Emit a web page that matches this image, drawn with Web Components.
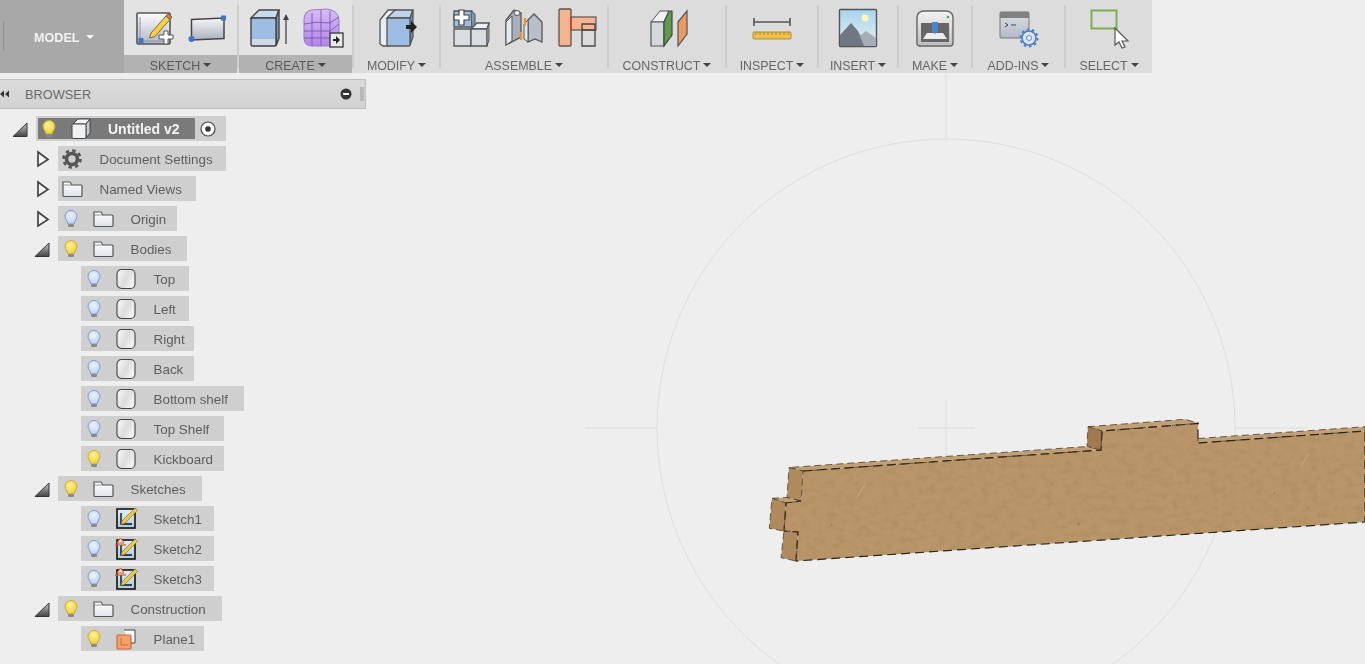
<!DOCTYPE html>
<html lang="en">
<head>
<meta charset="utf-8">
<title>Untitled v2</title>
<style>
    html, body { margin: 0; height: 100%; overflow: hidden; background: #eee; }
    body { font-family: "Liberation Sans", Arial, sans-serif; color: #5c5c5c; }
    /* the reference is a slightly soft capture */
    design-toolbar, browser-panel, model-viewport { filter: blur(.35px); }
</style>
</head>
<body>
<model-viewport></model-viewport>
<design-toolbar>
    <workspace-switch>MODEL</workspace-switch>
    <tool-group label="SKETCH" width="113" active>
        <app-icon name="sketch"></app-icon><app-icon name="rectangle"></app-icon>
    </tool-group>
    <tool-group label="CREATE" width="115" active separated>
        <app-icon name="extrude"></app-icon><app-icon name="form"></app-icon>
    </tool-group>
    <tool-group label="MODIFY" width="87" separated><app-icon name="pressPull"></app-icon></tool-group>
    <tool-group label="ASSEMBLE" width="168" separated>
        <app-icon name="component"></app-icon><app-icon name="joint"></app-icon><app-icon name="asBuilt"></app-icon>
    </tool-group>
    <tool-group label="CONSTRUCT" width="118" separated><app-icon name="plane"></app-icon></tool-group>
    <tool-group label="INSPECT" width="92" separated><app-icon name="measure"></app-icon></tool-group>
    <tool-group label="INSERT" width="80" separated><app-icon name="picture"></app-icon></tool-group>
    <tool-group label="MAKE" width="74" separated><app-icon name="printer"></app-icon></tool-group>
    <tool-group label="ADD-INS" width="93" separated><app-icon name="addins"></app-icon></tool-group>
    <tool-group label="SELECT" width="88" separated><app-icon name="select"></app-icon></tool-group>
</design-toolbar>
<browser-panel>
    <tree-row depth="0" width="190" expander="open" bulb="on" icon="box" active>Untitled v2<app-icon slot="end" name="target" size="20"></app-icon></tree-row>
    <tree-row depth="1" width="168" expander="closed" icon="gear">Document Settings</tree-row>
    <tree-row depth="1" width="138" expander="closed" icon="folder">Named Views</tree-row>
    <tree-row depth="1" width="119" expander="closed" bulb="off" icon="folder">Origin</tree-row>
    <tree-row depth="1" width="129" expander="open" bulb="on" icon="folder">Bodies</tree-row>
    <tree-row depth="2" width="108" bulb="off" icon="body">Top</tree-row>
    <tree-row depth="2" width="108" bulb="off" icon="body">Left</tree-row>
    <tree-row depth="2" width="113" bulb="off" icon="body">Right</tree-row>
    <tree-row depth="2" width="113" bulb="off" icon="body">Back</tree-row>
    <tree-row depth="2" width="163" bulb="off" icon="body">Bottom shelf</tree-row>
    <tree-row depth="2" width="143" bulb="off" icon="body">Top Shelf</tree-row>
    <tree-row depth="2" width="143" bulb="on" icon="body">Kickboard</tree-row>
    <tree-row depth="1" width="144" expander="open" bulb="on" icon="folder">Sketches</tree-row>
    <tree-row depth="2" width="133" bulb="off" icon="sketchItem">Sketch1</tree-row>
    <tree-row depth="2" width="133" bulb="off" icon="sketchWarn">Sketch2</tree-row>
    <tree-row depth="2" width="133" bulb="off" icon="sketchWarn">Sketch3</tree-row>
    <tree-row depth="1" width="164" expander="open" bulb="on" icon="folder">Construction</tree-row>
    <tree-row depth="2" width="123" bulb="on" icon="planeItem">Plane1</tree-row>
</browser-panel>
<script>
/**
 * Shared fragments for the icon set.
 */
const grad = (id, top, bottom) => `<linearGradient id="${id}" x1="0" y1="0" x2="0" y2="1"><stop offset="0" stop-color="${top}"/><stop offset="1" stop-color="${bottom}"/></linearGradient>`;

/**
 * All icons, as the inner markup of a 40x40 svg (tree icons use the same box).
 */
const ICONS = {
    sketch: `<defs>${grad('a', '#fdfdfd', '#aeb6c8')}</defs>
        <rect x="3" y="5" width="33" height="31" rx="1" fill="url(#a)" stroke="#555" stroke-width="1.6"/>
        <path d="M6 9v24h24" fill="none" stroke="#8a8f9c"/>
        <rect x="4.5" y="30" width="5" height="5" fill="#3f74c8"/>
        <path d="M17 25l15-17 4 3.500-15 17-5.500 1.500z" fill="#f3cf4a" stroke="#7a6a3a"/>
        <path d="M32 8l2-2.500 4 3.500-2 2.500z" fill="#c9835a" stroke="#7a5a3a"/>
        <path d="M26 26h5v-4h4v4h5v4h-5v5h-4v-5h-5z" transform="translate(-1 1)" fill="#fff" stroke="#555"/>`,
    rectangle: `<defs>${grad('a', '#f6f7f9', '#a9b0c0')}</defs>
        <path d="M4.500 11.500L37 10v20.500L4.500 32z" fill="url(#a)" stroke="#444" stroke-width="1.500"/>
        <rect x="34" y="7.500" width="5" height="5" fill="#3f74c8"/>
        <circle cx="4.500" cy="31" r="3" fill="#3f74c8"/>`,
    extrude: `<path d="M2 10L10 2h20l-3 8z" fill="#c8daee" stroke="#444" stroke-width="1.400"/>
        <path d="M27 10l3-8v28l-3 8z" fill="#8299b6" stroke="#444" stroke-width="1.400"/>
        <rect x="2" y="10" width="25" height="28" rx="1.500" fill="#9dbde2" stroke="#444" stroke-width="1.400"/>
        <rect x="3" y="31" width="23" height="6" fill="#cfdae6"/>
        <path d="M37 36V10" stroke="#444" stroke-width="1.300"/><path d="M34 12l3-6 3 6z" fill="#444"/>`,
    form: `<defs>${grad('a', '#d8bdf5', '#b184ea')}</defs>
        <path d="M2 12Q2 3 10 2L25 1Q36 2 37 12V32Q37 38 30 38H10Q2 38 2 30z" fill="url(#a)" stroke="#9a78cc"/>
        <path d="M2 16Q14 13 28 15L37 9M2 23H28L37 16M2 30H28M10 5V38M19 2V38M28 3V38" fill="none" stroke="#7a56b0" stroke-width=".9"/>
        <rect x="28" y="25" width="13" height="14" fill="#e8e8e8" stroke="#444" stroke-width="1.400"/>
        <path d="M31 31h3v-3l4 4-4 4v-3h-3z" fill="#222"/>`,
    pressPull: `<path d="M3 36V12L11 2h8L12 12v26H6z" fill="#e9edf1" stroke="#555" stroke-width="1.300"/>
        <path d="M10 10l8-8h18l-3 8z" fill="#bfd3ea" stroke="#555" stroke-width="1.300"/>
        <path d="M33 10l3-8v27l-3 8z" fill="#6f8fb8" stroke="#555" stroke-width="1.300"/>
        <rect x="10" y="10" width="23" height="28" rx="1" fill="#9dbde2" stroke="#555" stroke-width="1.300"/>
        <path d="M29 17h5v-4l6 6-6 6v-4h-5z" fill="#222"/>`,
    component: `<path d="M3 3h18v16H3z" fill="#9dbde2" stroke="#555" stroke-width="1.300"/>
        <path d="M20 3l4 3v15h-3z" fill="#7b98ba" stroke="#555"/>
        <path d="M3 21h17v17H3z" fill="#d9dde2" stroke="#555" stroke-width="1.300"/>
        <path d="M20 21l6-6h12l-2 6z" fill="#eef0f3" stroke="#555" stroke-width="1.300"/>
        <path d="M20 21h16v17H20z" fill="#d9dde2" stroke="#555" stroke-width="1.300"/>
        <path d="M36 21l2-6v17l-2 6z" fill="#aab1ba" stroke="#555"/>
        <path d="M3 7h5V2h5v5h5v5h-5v5H8v-5H3z" fill="#fff" stroke="#444" stroke-width="1.200"/>`,
    joint: `<path d="M2 37V12L10 2l7 3v24z" fill="#a9b0bb" stroke="#555" stroke-width="1.300"/>
        <ellipse cx="13" cy="5" rx="3" ry="2.500" fill="#eee" stroke="#555"/>
        <path d="M2 37V14l6-6v25z" fill="#e6e9ec" stroke="#555"/>
        <path d="M38 34V14L30 6l-6 6v22l7-3z" fill="#b9bfc9" stroke="#555" stroke-width="1.300"/>
        <path d="M24 12l-4 4v15l4 3z" fill="#e6e9ec" stroke="#555"/>
        <path d="M21 10v8M17 24v8" stroke="#e8913f" stroke-width="2.400"/>`,
    asBuilt: `<rect x="2" y="1" width="12" height="37" rx="1" fill="#f5b48b" stroke="#555" stroke-width="1.300"/>
        <rect x="14" y="9" width="25" height="13" fill="#f5b48b" stroke="#555" stroke-width="1.200"/>
        <path d="M14 9v13" stroke="#e2312b" stroke-width="1.200"/>
        <path d="M25 16h13v22H25zM25 22h13" fill="none" stroke="#444" stroke-width="1.300"/>`,
    plane: `<path d="M4 14l9-11h9l-5 11z" fill="#f1f3f2" stroke="#555"/>
        <path d="M4 14h13v24H4z" fill="#d4d8dc" stroke="#555" stroke-width="1.200"/>
        <path d="M17 14l5-11h3v24l-8 11z" fill="#5f9a4d" stroke="#444" stroke-width="1.200"/>
        <path d="M31 14l9-11v23l-9 12z" fill="#e89c62" stroke="#555" stroke-width="1.200"/>`,
    measure: `<path d="M2 14h36" stroke="#555" stroke-width="1.400"/><path d="M2 10v8M38 10v8" stroke="#555" stroke-width="1.600"/>
        <rect x="1" y="24" width="38" height="7" rx="1" fill="#eec04c" stroke="#b08a3a"/>
        <path d="M4 24v3M8 24v3M12 24v3M16 24v3M20 24v3M24 24v3M28 24v3M32 24v3M36 24v3" stroke="#9a7a2a" stroke-width=".8"/>`,
    picture: `<defs>${grad('a', '#a8d4ef', '#e6f0f0')}</defs>
        <rect x="1.500" y="1.500" width="37" height="37" rx="1" fill="url(#a)" stroke="#555" stroke-width="1.400"/>
        <circle cx="27" cy="10" r="3.500" fill="#fdf6c0"/>
        <path d="M2 29l12-10 9 8 5-4 10 7v8H2z" fill="#a5adb5"/>
        <path d="M2 38V27l11-12 7 8 6 15z" fill="#6f7880"/>`,
    printer: `<defs>${grad('a', '#f4f4f4', '#bdbdbd')}</defs>
        <path d="M2 10Q2 4 8 3H32Q38 4 38 10V35Q38 38 35 38H5Q2 38 2 35z" fill="url(#a)" stroke="#666" stroke-width="1.400"/>
        <rect x="6" y="15" width="28" height="19" fill="#666"/>
        <path d="M8 31l4-6h16l4 6z" fill="#ececec"/><path d="M17 14h6v9l-3 3-3-3z" fill="#4a86cf"/>
        <circle cx="33" cy="9" r="1.300" fill="#4aa54a"/>`,
    addins: `<defs>${grad('a', '#dde0e6', '#b3bac6')}</defs>
        <rect x="1" y="4" width="29" height="26" rx="1" fill="url(#a)" stroke="#777"/>
        <rect x="1" y="4" width="29" height="6" fill="#808080"/>
        <path d="M6 15l3 2-3 2M12 17h5" fill="none" stroke="#444"/>
        <circle cx="30" cy="30" r="7" fill="#d6e5f8" stroke="#4a7cc8" stroke-width="1.600"/>
        <circle cx="30" cy="30" r="8.500" fill="none" stroke="#4a7cc8" stroke-width="2" stroke-dasharray="2.600 2.740"/>
        <circle cx="30" cy="30" r="2.400" fill="#fff" stroke="#4a7cc8"/>`,
    select: `<rect x="2.500" y="2.500" width="25" height="18" fill="none" stroke="#7fac53" stroke-width="2"/>
        <path d="M26 20v17l4-3 3 6 3-1-3-6h6z" fill="#fff" stroke="#555" stroke-width="1.200"/>`,
    box: `<path d="M4 7l5-5h12l-4 5z" fill="#f5f5f5" stroke="#444"/>
        <path d="M17 7l4-5v14l-4 5z" fill="#c9ccd2" stroke="#444"/>
        <rect x="3" y="7" width="14" height="14.500" rx="1.500" fill="#eff0f2" stroke="#444"/>`,
    folder: `<defs>${grad('a', '#ffffff', '#dfe3ea')}</defs>
        <path d="M3 5h7l2 3h9q1 0 1 1v9.500q0 1-1 1H4q-1 0-1-1z" fill="url(#a)" stroke="#555" stroke-width="1.200"/>
        <path d="M3 8h9" stroke="#777" stroke-width=".8"/>`,
    body: `<defs><linearGradient id="a" x1="0" y1="0" x2="1" y2=".5"><stop offset="0" stop-color="#fbfbfb"/><stop offset=".6" stop-color="#dcdcdc"/><stop offset="1" stop-color="#f2f2f2"/></linearGradient></defs>
        <rect x="3" y="2.500" width="18" height="19" rx="4.500" fill="url(#a)" stroke="#444" stroke-width="1.100"/>`,
    gear: `<circle cx="12" cy="12" r="5.500" fill="none" stroke="#555" stroke-width="3.600"/>
        <circle cx="12" cy="12" r="8.500" fill="none" stroke="#555" stroke-width="2.600" stroke-dasharray="3.400 3.270"/>`,
    target: `<circle cx="10" cy="10" r="7" fill="#fff" stroke="#444" stroke-width="1.200"/><circle cx="10" cy="10" r="2.800" fill="#333"/>`,
    sketchItem: `<defs>${grad('a', '#e4eef5', '#a9cbe2')}</defs>
        <rect x="3" y="2" width="18" height="19" fill="url(#a)" stroke="#111" stroke-width="1.600"/>
        <path d="M7 6v11h11" fill="none" stroke="#111" stroke-width="1.400"/>
        <path d="M8 14L21 1l2.500 2.500-13 13-3.500 1z" fill="#f0c93a" stroke="#666" stroke-width=".6"/>`,
    sketchWarn: `<defs>${grad('a', '#e4eef5', '#a9cbe2')}</defs>
        <rect x="3" y="3" width="18" height="19" fill="url(#a)" stroke="#111" stroke-width="1.600"/>
        <path d="M7 8v10h11" fill="none" stroke="#111" stroke-width="1.400"/>
        <path d="M8 15L21 2l2.500 2.500-13 13-3.500 1z" fill="#f0c93a" stroke="#666" stroke-width=".6"/>
        <path d="M3 6l3.500-5L10 6z" fill="#fbe3d4" stroke="#d8592a"/><path d="M1 8h11" stroke="#d8592a" stroke-width="1.200"/>`,
    planeItem: `<path d="M10 3h11v13H16" fill="#fff" stroke="#444" stroke-width="1"/>
        <rect x="3" y="8" width="14" height="14" rx="1" fill="#f3a26c" stroke="#d2683a" stroke-width="1.200"/>
        <path d="M7 11v7h7" fill="none" stroke="#d2683a"/>`,
    bulbOn: `<defs><radialGradient id="b" cx=".45" cy=".35" r=".7"><stop offset="0" stop-color="#fff59a"/><stop offset="1" stop-color="#f0c72c"/></radialGradient></defs>
        <path d="M8 1.500a6 6 0 0 1 6 6c0 3-2.500 4.500-3 7.500H5C4.500 12 2 10.500 2 7.500a6 6 0 0 1 6-6z" fill="url(#b)" stroke="#cfa93a"/>
        <rect x="5" y="15" width="6" height="3" rx="1.200" fill="#8a8a8a"/>`,
    bulbOff: `<defs><radialGradient id="b" cx=".45" cy=".35" r=".7"><stop offset="0" stop-color="#eef4ff"/><stop offset="1" stop-color="#b7cdf2"/></radialGradient></defs>
        <path d="M8 1.500a6 6 0 0 1 6 6c0 3-2.500 4.500-3 7.500H5C4.500 12 2 10.500 2 7.500a6 6 0 0 1 6-6z" fill="url(#b)" stroke="#7f9bd0"/>
        <rect x="5" y="15" width="6" height="3" rx="1.200" fill="#8a8a8a"/>`,
    arrowOpen: `<defs>${grad('a', '#c8c8c8', '#444')}</defs><path d="M1 14.500L15 1v13.500z" fill="url(#a)" stroke="#333"/>`,
    arrowClosed: `<path d="M2 1l10 7.500L2 15z" fill="#f4f4f4" stroke="#444" stroke-width="1.700"/>`
};

/**
 * Icon drawn as inline svg, looked up by name in ICONS.
 */
customElements.define('app-icon', class AppIcon extends HTMLElement {
    /**
     * Creates a new instance of the class.
     */
    constructor() {
        super();
        this.attachShadow({ mode: 'open' });
    }

    /**
     * Event triggered when the component is attached to DOM.
     * Renders the svg in the requested size.
     */
    connectedCallback() {
        const size = this.getAttribute('size') || 40;
        this.shadowRoot.innerHTML = `
            <style>:host { display: block; width: ${size}px; height: ${size}px; } svg { display: block; overflow: visible; }</style>
            <svg width="${size}" height="${size}" viewBox="0 0 ${size} ${size}">${ICONS[this.getAttribute('name')] || ''}</svg>
        `;
    }
});

/**
 * Top toolbar strip holding the workspace switch and the tool groups.
 */
customElements.define('design-toolbar', class DesignToolbar extends HTMLElement {
    constructor() {
        super();
        this.attachShadow({ mode: 'open' });
        this.shadowRoot.innerHTML = `
            <style>
                :host { display: flex; position: relative; width: 1152px; height: 73px; background: #dcdcdc; }
            </style>
            <slot></slot>
        `;
    }
});

/**
 * Dark MODEL dropdown at the left of the toolbar.
 */
customElements.define('workspace-switch', class WorkspaceSwitch extends HTMLElement {
    constructor() {
        super();
        this.attachShadow({ mode: 'open' });
        this.shadowRoot.innerHTML = `
            <style>
                :host {
                    display: flex; box-sizing: border-box; width: 124px; height: 73px; padding: 2px 0 0 34px;
                    align-items: center; gap: 7px; background: #a8a8a8; color: #f4f4f4;
                    font-size: 12.6px; font-weight: bold; position: relative;
                }
                :host::before {
                    content: ""; position: absolute; left: 3px; top: 22px; width: 1px; height: 28px; background: #8f8f8f;
                }
                i { border: 4.500px solid transparent; border-top: 4.500px solid #f4f4f4; border-bottom: 0; margin-top: -2px; }
            </style>
            <span><slot></slot></span><i></i>
        `;
    }
});

/**
 * Toolbar group: a row of tool icons above a label with a dropdown arrow.
 */
customElements.define('tool-group', class ToolGroup extends HTMLElement {
    constructor() {
        super();
        this.attachShadow({ mode: 'open' });
        this.shadowRoot.innerHTML = `
            <style>
                :host { display: flex; flex-direction: column; box-sizing: border-box; height: 73px; position: relative; }
                :host([separated]) { padding-left: 2px; }
                :host([separated])::before {
                    content: ""; position: absolute; left: 0; top: 5px; bottom: 5px; width: 2px; background: #cdcdcd;
                }
                .tools { display: flex; justify-content: center; gap: 13px; height: 55px; box-sizing: border-box; padding-top: 8px; }
                .label {
                    display: flex; justify-content: center; align-items: center; gap: 3px; height: 18px;
                    box-sizing: border-box; padding-top: 3px; font-size: 12.4px; color: #666;
                }
                :host([active]) .tools { background: #e3e3e3; }
                :host([active]) .label { background: #b2b2b2; color: #5a5a5a; }
                i { border: 4px solid transparent; border-top: 4px solid #444; border-bottom: 0; margin-top: -2px; }
            </style>
            <div class="tools"><slot></slot></div>
            <div class="label"><span></span><i></i></div>
        `;
    }

    /**
     * Event triggered when the component is attached to DOM.
     * Applies the label text and the group width from the attributes.
     */
    connectedCallback() {
        this.shadowRoot.querySelector('span').textContent = this.getAttribute('label');
        this.style.width = `${this.getAttribute('width')}px`;
    }
});

/**
 * Browser panel: a title bar over the tree rows.
 */
customElements.define('browser-panel', class BrowserPanel extends HTMLElement {
    /**
     * Creates a new instance of the class.
     */
    constructor() {
        super();
        this.attachShadow({ mode: 'open' });
        this.shadowRoot.innerHTML = `
            <style>
                :host { display: block; position: relative; margin-top: 6px; }
                header {
                    display: flex; align-items: center; box-sizing: border-box; width: 366px; height: 30px;
                    background: linear-gradient(#dbdbdb, #d2d2d2); border: 1px solid #bdbdbd; border-left: 0;
                    font-size: 12.8px; color: #6a6a6a;
                }
                header span { margin-left: 15px; flex: 1; }
                svg { display: block; }
                .rows { padding-top: 7px; }
            </style>
            <header>
                <svg width="10" height="10" viewBox="0 0 10 10"><path d="M0 5l4-3.500v7zM5 5l4-3.500v7z" fill="#333"/></svg>
                <span>BROWSER</span>
                <svg width="12" height="12" viewBox="0 0 12 12"><circle cx="6" cy="6" r="5.500" fill="#333"/><rect x="3" y="5" width="6" height="2" fill="#fff"/></svg>
                <svg width="8" height="16" viewBox="0 0 8 16" style="margin:0 -1px 0 6px"><path d="M3 1v14M5 1v14" stroke="#9a9a9a"/></svg>
            </header>
            <div class="rows"><slot></slot></div>
        `;
    }
});

/**
 * One row of the browser tree: expander, then a grey chip with bulb, icon and name.
 */
customElements.define('tree-row', class TreeRow extends HTMLElement {
    /**
     * Left margin of a row for each tree depth.
     */
    _margins = { 0: 12, 1: 34, 2: 57 };

    /**
     * Creates a new instance of the class.
     */
    constructor() {
        super();
        this.attachShadow({ mode: 'open' });
    }

    /**
     * Event triggered when the component is attached to DOM.
     * Builds the row from its attributes.
     */
    connectedCallback() {
        const bulb = this.getAttribute('bulb');
        const expander = this.getAttribute('expander');
        const depth = this.getAttribute('depth');
        const arrow = expander === 'open' ? 'arrowOpen' : 'arrowClosed';
        this.shadowRoot.innerHTML = `
            <style>
                :host { display: flex; height: 25px; margin: 0 0 5px ${this._margins[depth]}px; font-size: 13.4px; color: #5e5e5e; }
                .expander { width: 24px; padding-top: 6px; box-sizing: border-box; }
                :host([expander="closed"]) .expander { padding-left: 2px; padding-top: 5px; }
                .chip { display: flex; box-sizing: border-box; width: ${this.getAttribute('width')}px; height: 25px; background: #cfcfcf; }
                .inner { display: flex; flex: 1; align-items: center; }
                .bulb { width: 26px; padding-left: 5px; box-sizing: border-box; }
                .icon { width: 38px; padding-left: 7px; box-sizing: border-box; }
                .bare { width: 28px; padding-left: 2px; padding-right: 0; }
                .bare + .name { margin-left: 13.500px; }
                .name { margin-left: 8.500px; padding-top: 1px; white-space: nowrap; }
                :host([active]) .chip { padding: 2px 0 2px 2px; }
                :host([active]) .inner { background: #7a7a7a; color: #f4f4f4; font-weight: bold; font-size: 14px; }
                :host([active]) .bulb { width: 24px; padding-left: 3px; }
                :host([active]) .name { margin-left: 8px; }
                .end { display: flex; align-items: center; width: 31px; box-sizing: border-box; padding-left: 3px; }
            </style>
            <div class="expander">${expander ? `<app-icon name="${arrow}" size="16"></app-icon>` : ''}</div>
            <div class="chip">
                <div class="inner">
                    ${bulb ? `<div class="bulb"><app-icon name="${bulb === 'on' ? 'bulbOn' : 'bulbOff'}" size="19"></app-icon></div>` : ''}
                    <div class="icon ${bulb ? '' : 'bare'}"><app-icon name="${this.getAttribute('icon')}" size="24"></app-icon></div>
                    <span class="name"><slot></slot></span>
                </div>
                ${this.querySelector('[slot=end]') ? '<div class="end"><slot name="end"></slot></div>' : ''}
            </div>
        `;
    }
});

/**
 * 3D viewport behind the interface: ground circle, axis marks and the textured board.
 */
customElements.define('model-viewport', class ModelViewport extends HTMLElement {
    /**
     * Outline of the front face of the board.
     */
    _front = '803,471 1101,450 1102,431 1198,423.500 1198,443 1365,431 1365,522 796,561 798,532 784,531 786,503 801,501';

    /**
     * Creates a new instance of the class.
     */
    constructor() {
        super();
        this.attachShadow({ mode: 'open' });
        this.shadowRoot.innerHTML = `
            <style>
                :host { position: absolute; inset: 0; display: block; }
                svg { display: block; }
                .guide { fill: none; stroke: #dedede; }
                .edge { stroke: #2e2618; stroke-width: 1.200; stroke-dasharray: 9 5; fill: none; }
                .edge-soft { stroke: #4a3e2a; stroke-width: .8; stroke-dasharray: 7 4; }
                .streak { stroke: #c8a67c; stroke-width: 1.400; fill: none; opacity: .7; }
                .speck { stroke: #8b6a44; stroke-width: 1.400; fill: none; opacity: .7; }
            </style>
            <svg width="1365" height="664" viewBox="0 0 1365 664">
                <defs>
                    <filter id="mdf" x="0" y="0" width="1" height="1">
                        <feTurbulence type="fractalNoise" baseFrequency=".11 .16" numOctaves="5" seed="7"/>
                        <feColorMatrix values="0 0 0 0 .38  0 0 0 0 .25  0 0 0 0 .1  0 0 0 1.100 -.44"/>
                        <feComposite in2="SourceGraphic" operator="in" result="grain"/>
                        <feMerge><feMergeNode in="SourceGraphic"/><feMergeNode in="grain"/></feMerge>
                    </filter>
                </defs>
                <circle class="guide" cx="946" cy="428" r="289"/>
                <path class="guide" d="M946 74V139M946 399V457M585 428H657M917 428H975M1235 428H1307"/>
                <g filter="url(#mdf)">
                    <polygon points="${this._front}" fill="#ba956b"/>
                </g>
                <path class="streak" d="M857 497l8-12M1301 466l7-11"/>
                <path class="speck" d="M831 525h1M1274 493h1M1078 523l1 2"/>
                <g class="edge-soft" stroke-linejoin="round">
                    <polygon points="789,467.500 803,471 1101,450 1087,446.500" fill="#c2a077"/>
                    <polygon points="1088,426.700 1185,419.300 1199,423.300 1102,431" fill="#c2a077"/>
                    <polygon points="1198,438.500 1365,426.700 1365,431 1198,443" fill="#c2a077"/>
                    <polygon points="1088,426.700 1102,431 1101,450 1087,446" fill="#a0794e"/>
                    <polygon points="789,467.500 803,471 801,501 787,497.500" fill="#b08a5f"/>
                    <polygon points="772,498.300 787,497.500 801,501 786,503" fill="#c2a077"/>
                    <polygon points="772,498.300 786,503 784,531 769.300,528.300" fill="#b08a5f"/>
                    <polygon points="784,531 798,532 796,561 781,557.700" fill="#b08a5f"/>
                </g>
                <polyline class="edge" points="${this._front}"/>
            </svg>
        `;
    }
});
</script>
</body>
</html>
